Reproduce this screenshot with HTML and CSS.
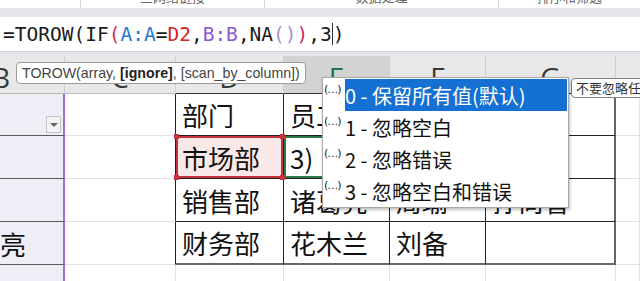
FILE: index.html
```html
<!DOCTYPE html>
<html lang="zh">
<head>
    <meta charset="UTF-8">
    <title>TOROW</title>
    <link rel="stylesheet" href="styles.css">
</head>
<body>
    <div class="sheet">
        <div class="ribbon">
            <div class="rb rb1"></div>
            <div class="rb rb2"><span>三网络链接</span></div>
            <div class="rb rb3"><span>数据处理</span></div>
            <div class="rb rb4"><span>排序和筛选</span></div>
        </div>
        <div class="band"></div>
        <div class="formula">
            <span>=TOROW(IF</span><span class="c-red">(</span><span class="c-blue">A:A</span><span>=</span><span class="c-red2">D2</span><span>,</span><span class="c-purple">B:B</span><span>,NA</span><span class="c-lilac">()</span><span class="c-red">)</span><span>,3</span><span class="caret"></span><span>)</span>
        </div>
        <div class="band2"></div>

        <div class="grid">
            <div class="hd hd-b">B</div>
            <div class="hd">C</div>
            <div class="hd hd-t">D</div>
            <div class="hd hd-t hd-on">E</div>
            <div class="hd hd-t">F</div>
            <div class="hd hd-t">G</div>
            <div class="hd hd-end"></div>

            <div class="rowhd"><span class="filter"></span></div>
            <div class="cell c-col"></div>
            <div class="cell t">部门</div>
            <div class="cell t">员工</div>
            <div class="cell t"></div>
            <div class="cell t t-last"></div>
            <div class="cell"></div>

            <div class="rowhd"></div>
            <div class="cell c-col"></div>
            <div class="cell t sel">市场部
                <span class="h h1"></span><span class="h h2"></span><span class="h h3"></span><span class="h h4"></span>
            </div>
            <div class="cell t edit">3)</div>
            <div class="cell t"></div>
            <div class="cell t t-last"></div>
            <div class="cell"></div>

            <div class="rowhd"></div>
            <div class="cell c-col"></div>
            <div class="cell t">销售部</div>
            <div class="cell t">诸葛亮</div>
            <div class="cell t">周瑜</div>
            <div class="cell t t-last">孙尚香</div>
            <div class="cell"></div>

            <div class="rowhd rowtxt">亮</div>
            <div class="cell c-col"></div>
            <div class="cell t t-bot">财务部</div>
            <div class="cell t t-bot">花木兰</div>
            <div class="cell t t-bot">刘备</div>
            <div class="cell t t-last t-bot"></div>
            <div class="cell"></div>

            <div class="rowhd rowhd-end"></div>
            <div class="cell"></div>
            <div class="cell"></div>
            <div class="cell"></div>
            <div class="cell"></div>
            <div class="cell"></div>
            <div class="cell"></div>
        </div>

        <div class="tip">TOROW(array, <b>[ignore]</b>, [scan_by_column])</div>

        <ul class="drop">
            <li class="on"><span class="ico">(…)</span><span class="txt">0 - 保留所有值(默认)</span></li>
            <li><span class="ico">(…)</span><span class="txt">1 - 忽略空白</span></li>
            <li><span class="ico">(…)</span><span class="txt">2 - 忽略错误</span></li>
            <li><span class="ico">(…)</span><span class="txt">3 - 忽略空白和错误</span></li>
        </ul>

        <div class="tip2">不要忽略任何值</div>
    </div>
</body>
</html>
```

FILE: styles.css
```css
body {
    margin: 0;
    background: #ffffff;
    overflow: hidden;
}

.sheet {
    position: relative;
    width: 640px;
    height: 281px;
    overflow: hidden;
    font-family: "Noto Sans CJK SC", "Noto Sans", sans-serif;
}

/* cut-off ribbon strip */
.ribbon {
    display: flex;
    height: 8px;
    background: #ffffff;
    overflow: hidden;
}

.rb {
    height: 8px;
    border-right: 1px solid #d6d6d6;
    text-align: center;
    font-size: 13px;
    line-height: 13px;
    color: #666;
}

.rb span {
    display: block;
    margin-top: -10px;
}

.rb1 { width: 80px; }
.rb2 { width: 183px; }
.rb3 { width: 233px; }
.rb4 { flex: 1; border-right: none; }

.band {
    height: 9px;
    background: #e6e6ea;
}

.formula {
    height: 34px;
    border-bottom: 1px solid #d0d0d4;
    padding-left: 3px;
    display: flex;
    align-items: center;
    font-family: "DejaVu Sans Mono", monospace;
    font-size: 19.5px;
    color: #1a1a1a;
    white-space: pre;
}

.c-red { color: #d02a62; }
.c-red2 { color: #d42424; }
.c-blue { color: #2577d2; }
.c-purple { color: #8a58cc; }
.c-lilac { color: #a68ede; }

.caret {
    display: inline-block;
    width: 0;
    height: 22px;
    border-left: 1px solid #333;
}

.band2 {
    height: 4px;
    background: #e6e6ea;
}

/* sheet grid */
.grid {
    display: grid;
    grid-template-columns: 65px 111px 108px 106px 96px 130px 24px;
    grid-template-rows: 38px 42px 43px 43px 43px 20px;
}

.hd {
    box-sizing: border-box;
    background: #e8e8e8;
    border-right: 1px solid #cfcfcf;
    border-bottom: 1px solid #b8b8b8;
    display: flex;
    align-items: center;
    justify-content: center;
    font-family: "Open Sans", sans-serif;
    font-size: 28px;
    color: #3a3a3a;
    padding-top: 4px;
}

.hd-b {
    justify-content: flex-start;
    text-indent: -8px;
    overflow: hidden;
}

.hd-t { border-bottom-color: #333; }

.hd-on {
    background: #d3d3d3;
    color: #217346;
}

.hd-end { border-right: none; }

.rowhd {
    box-sizing: border-box;
    background: #efedf5;
    border-right: 2px solid #9c6fd8;
    border-bottom: 1px solid #5a5a5a;
    display: flex;
    align-items: flex-end;
    justify-content: flex-end;
    padding: 0 2px 2px 0;
}

.rowhd-end { border-bottom: none; }

.rowtxt {
    justify-content: flex-start;
    align-items: center;
    padding: 0;
    font-size: 26px;
    color: #111;
}

.filter {
    box-sizing: border-box;
    width: 15px;
    height: 17px;
    background: #f4f4f4;
    border: 1px solid #c4c4c4;
    display: flex;
    align-items: center;
    justify-content: center;
}

.filter::after {
    content: "";
    border-left: 4px solid transparent;
    border-right: 4px solid transparent;
    border-top: 4px solid #666;
}

.cell {
    box-sizing: border-box;
    border-right: 1px solid #e2e2e2;
    border-bottom: 1px solid #e2e2e2;
    display: flex;
    align-items: center;
    padding-left: 6px;
    font-size: 26px;
    color: #111;
    white-space: nowrap;
    overflow: hidden;
}

.c-col { border-right-color: #222; }

.t {
    border-right-color: #222;
    border-bottom-color: #222;
}

.t-last {
    border-right: 2px solid #666;
}

.t-bot {
    border-bottom: 2px solid #666;
}

.sel {
    position: relative;
    overflow: visible;
    background: #f9e8e8;
    box-shadow: inset 0 0 0 2px #c6323d;
}

.h {
    position: absolute;
    width: 5px;
    height: 5px;
    background: #c6323d;
}

.h1 { left: -2px; top: -2px; }
.h2 { right: -2px; top: -2px; }
.h3 { left: -2px; bottom: -2px; }
.h4 { right: -2px; bottom: -2px; }

.edit {
    box-shadow: inset 0 0 0 2px #2a7a48;
}

/* overlays */
.tip {
    position: absolute;
    left: 16px;
    top: 62px;
    height: 22px;
    box-sizing: border-box;
    padding: 0 5px;
    background: #fff;
    border: 1px solid #9a9a9a;
    border-radius: 4px;
    font-family: "Liberation Sans", sans-serif;
    font-size: 14.2px;
    line-height: 20px;
    color: #444;
    white-space: nowrap;
}

.tip b { color: #222; }

.drop {
    position: absolute;
    left: 322px;
    top: 77px;
    width: 247px;
    margin: 0;
    padding: 1px 1px 0 1px;
    box-sizing: border-box;
    list-style: none;
    background: #fff;
    border: 1px solid #a8a8a8;
    box-shadow: 1px 2px 3px rgba(0, 0, 0, 0.25);
}

.drop li {
    display: flex;
    height: 32px;
}

.ico {
    width: 21px;
    font-family: "DejaVu Sans", sans-serif;
    font-size: 11px;
    line-height: 11px;
    padding-top: 5px;
    color: #222;
    letter-spacing: -1px;
}

.txt {
    flex: 1;
    display: flex;
    align-items: center;
    font-size: 20px;
    color: #111;
    white-space: nowrap;
}

.on .txt {
    background: #1470d2;
    color: #fff;
}

.tip2 {
    position: absolute;
    left: 571px;
    top: 78px;
    height: 20px;
    box-sizing: border-box;
    padding: 0 4px;
    background: #fff;
    border: 1px solid #808080;
    border-radius: 4px;
    font-size: 13px;
    line-height: 18px;
    color: #333;
    white-space: nowrap;
}
```
